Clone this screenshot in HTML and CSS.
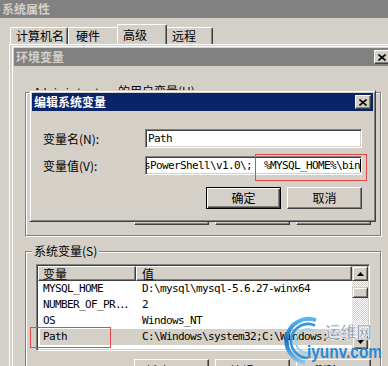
FILE: index.html
```html
<!DOCTYPE html>
<html lang="zh-CN">

<head>
  <meta charset="UTF-8">
  <meta name="viewport" content="width=device-width, initial-scale=1.0">
  <title>系统属性 - 编辑系统变量</title>
  <link rel="stylesheet" href="styles.css">
</head>

<body>
  <div class="screen">
    <!-- 系统属性 -->
    <div class="sys">
      <div class="caption inactive"><span>系统属性</span></div>
      <div class="tabs">
        <div class="tab tab-name">计算机名</div>
        <div class="tab tab-hw">硬件</div>
        <div class="tab tab-adv active">高级</div>
        <div class="tab tab-rm">远程</div>
      </div>
      <div class="panel"></div>
    </div>

    <!-- 环境变量 -->
    <div class="win env">
      <div class="caption inactive">
        <span>环境变量</span>
        <span class="xbtn"><svg width="8" height="7" viewBox="0 0 8 7"><path d="M0.5 0.5L7.5 6.5M7.5 0.5L0.5 6.5" stroke="#000" stroke-width="1.6" /></svg></span>
      </div>
      <div class="env-body">
        <fieldset class="group">
          <legend><span class="mono">Administrator </span>的用户变量(U)</legend>
          <div class="listview user-list"></div>
          <div class="btns">
            <button class="btn">新建(N)...</button>
            <button class="btn">编辑(E)...</button>
            <button class="btn">删除(D)</button>
          </div>
        </fieldset>
        <fieldset class="group">
          <legend>系统变量(S)</legend>
          <div class="listview">
            <div class="lv-main">
              <div class="lv-head">
                <div class="hcell c1">变量</div>
                <div class="hcell c2">值</div>
              </div>
              <div class="row">
                <div class="c1 mono">MYSQL_HOME</div>
                <div class="c2 mono">D:\mysql\mysql-5.6.27-winx64</div>
              </div>
              <div class="row">
                <div class="c1 mono">NUMBER_OF_PR<span class="dots">...</span></div>
                <div class="c2 mono">2</div>
              </div>
              <div class="row">
                <div class="c1 mono">OS</div>
                <div class="c2 mono">Windows_NT</div>
              </div>
              <div class="row sel">
                <div class="c1 mono">Path</div>
                <div class="c2 mono">C:\Windows\system32;C:\Windows;...</div>
              </div>
            </div>
            <div class="vscroll">
              <div class="sb-btn"><svg width="7" height="4" viewBox="0 0 7 4"><path d="M3.5 0L7 4H0Z" fill="#000" /></svg></div>
              <div class="sb-track gap"></div>
              <div class="sb-thumb"></div>
              <div class="sb-track"></div>
              <div class="sb-btn down"><svg width="7" height="4" viewBox="0 0 7 4"><path d="M0 0H7L3.5 4Z" fill="#000" /></svg></div>
            </div>
          </div>
          <div class="btns">
            <button class="btn">新建(W)...</button>
            <button class="btn">编辑(I)...</button>
            <button class="btn">删除(L)</button>
          </div>
        </fieldset>
      </div>
    </div>

    <!-- 编辑系统变量 -->
    <div class="win edit">
      <div class="caption active">
        <span>编辑系统变量</span>
        <span class="xbtn"><svg width="8" height="7" viewBox="0 0 8 7"><path d="M0.5 0.5L7.5 6.5M7.5 0.5L0.5 6.5" stroke="#000" stroke-width="1.6" /></svg></span>
      </div>
      <div class="edit-body">
        <div class="fields">
          <label>变量名(N):</label>
          <div class="field"><span class="mono">Path</span></div>
          <label>变量值(V):</label>
          <div class="field value"><span class="mono">C:\Windows\System32\WindowsPowerShell\v1.0\;  %MYSQL_HOME%\bin</span><span class="caret"></span></div>
        </div>
        <div class="btns dlg-btns">
          <button class="btn default">确定</button>
          <button class="btn">取消</button>
        </div>
      </div>
    </div>

    <div class="mark mark-path"></div>
    <div class="mark mark-value"></div>

    <svg class="watermark" width="108" height="50" viewBox="0 0 108 50">
      <defs>
        <linearGradient id="sw" x1="0" y1="0" x2="0" y2="1">
          <stop offset="0" stop-color="#58b8ec" />
          <stop offset="0.5" stop-color="#1570c8" />
          <stop offset="1" stop-color="#7cc8f0" />
        </linearGradient>
      </defs>
      <path d="M36 4.2A22 22 0 1 0 25 46.6" fill="none" stroke="url(#sw)" stroke-width="4" />
      <path d="M35 9.5A17 17 0 1 0 28 42" fill="none" stroke="#3596de" stroke-width="2.6" />
      <path d="M34 15A12 12 0 1 0 31 37" fill="none" stroke="#8fd2f2" stroke-width="2" />
      <text class="wm-cn" x="45" y="22" textLength="47" lengthAdjust="spacingAndGlyphs">运维网</text>
      <text class="wm-en" x="27" y="42" textLength="75" lengthAdjust="spacingAndGlyphs">iyunv.com</text>
    </svg>
  </div>
</body>

</html>
```

FILE: styles.css
```css
* {
  margin: 0;
  padding: 0;
  box-sizing: border-box;
}

body {
  width: 388px;
  height: 366px;
  overflow: hidden;
  background-color: #d4d0c8;
  color: #000;
  font-family: "Noto Sans CJK SC", sans-serif;
  font-size: 12px;
  line-height: 14px;
}

.screen {
  position: relative;
  width: 388px;
  height: 366px;
  overflow: hidden;
}

.mono {
  font-family: "DejaVu Sans Mono", monospace;
  font-size: 11px;
  letter-spacing: -0.62px;
  white-space: pre;
}

/* title bars */
.caption {
  display: flex;
  justify-content: space-between;
  align-items: center;
  height: 18px;
  padding: 0 2px;
  font-weight: bold;
}

.caption.inactive {
  background-color: #828182;
  color: #d4d0c8;
}

.caption.active {
  background-color: #0a246a;
  color: #fff;
}

.xbtn {
  display: flex;
  justify-content: center;
  align-items: center;
  width: 16px;
  height: 14px;
  background-color: #d4d0c8;
  border: 1px solid;
  border-color: #fff #404040 #404040 #fff;
  box-shadow: inset -1px -1px #808080;
}

/* system properties */
.tabs {
  display: flex;
  align-items: flex-end;
  height: 26px;
  padding-left: 10px;
}

.tab {
  height: 17px;
  line-height: 16px;
  border-top: 1px solid #fff;
  border-left: 1px solid #fff;
  border-right: 1px solid #404040;
  border-radius: 2px 2px 0 0;
  box-shadow: inset -1px 0 #808080;
  background-color: #d4d0c8;
}

.tab-name {
  width: 58px;
  padding-left: 5px;
}

.tab-hw {
  width: 51px;
  padding-left: 7px;
}

.tab-adv {
  width: 46px;
}

.tab-rm {
  width: 48px;
  padding-left: 6px;
}

.tab.active {
  position: relative;
  z-index: 1;
  width: 50px;
  height: 20px;
  margin: 0 -2px;
  padding: 2px 0 0 5px;
}

.panel {
  height: 322px;
  margin-left: 9px;
  border-top: 1px solid #fff;
  border-left: 1px solid #fff;
}

/* windows */
.win {
  position: absolute;
  padding: 2px;
  background-color: #d4d0c8;
  border: 1px solid;
  border-color: #d4d0c8 #404040 #404040 #d4d0c8;
  box-shadow: inset 1px 1px #fff, inset -1px -1px #808080;
}

.env {
  left: 11px;
  top: 45px;
  width: 384px;
  height: 340px;
}

.env-body {
  display: flex;
  flex-direction: column;
  gap: 8px;
  padding: 18px 11px 0;
}

.group {
  display: flex;
  flex-direction: column;
  gap: 8px;
  padding: 6px 10px 10px;
  border: 1px solid #808080;
  box-shadow: inset 1px 1px #fff, 1px 1px #fff;
}

.group legend {
  margin-left: -4px;
  padding: 0 2px;
  line-height: 14px;
  background-color: #d4d0c8;
}

.listview {
  display: flex;
  height: 87px;
  padding: 1px;
  background-color: #fff;
  border: 1px solid;
  border-color: #808080 #fff #fff #808080;
  box-shadow: inset 1px 1px #404040, inset -1px -1px #d4d0c8;
}

.user-list {
  height: 88px;
}

.lv-main {
  flex: 1;
  overflow: hidden;
}

.lv-head {
  display: flex;
  height: 15px;
}

.hcell {
  line-height: 13px;
  background-color: #d4d0c8;
  border: 1px solid;
  border-color: #fff #404040 #404040 #fff;
  box-shadow: inset -1px -1px #808080;
}

.c1 {
  flex: none;
  width: 98px;
  padding-left: 4px;
}

.c2 {
  flex: 1;
  padding-left: 5px;
}

.row {
  display: flex;
  height: 16px;
  line-height: 16px;
}

.row .c1 {
  padding-left: 5px;
}

.row .c2 {
  padding-left: 6px;
}

.row.sel {
  background: linear-gradient(to right, #fff 2px, #d4d0c8 2px);
}

.dots {
  letter-spacing: -2.6px;
}

.vscroll {
  display: flex;
  flex-direction: column;
  width: 16px;
}

.sb-btn,
.sb-thumb {
  display: flex;
  justify-content: center;
  align-items: center;
  height: 15px;
  background-color: #d4d0c8;
  border: 1px solid;
  border-color: #d4d0c8 #404040 #404040 #d4d0c8;
  box-shadow: inset 1px 1px #fff, inset -1px -1px #808080;
}

.sb-btn.down {
  height: 14px;
}

.sb-thumb {
  height: 11px;
}

.sb-track {
  flex: 1;
  background: repeating-conic-gradient(#d4d0c8 0 25%, #fff 0 50%) 0 0 / 2px 2px;
}

.sb-track.gap {
  flex: none;
  height: 6px;
}

/* buttons */
.btns {
  display: flex;
  justify-content: flex-end;
  gap: 6px;
  margin-right: -1px;
}

.btn {
  width: 75px;
  height: 23px;
  font: inherit;
  color: #000;
  background-color: #d4d0c8;
  border: 1px solid;
  border-color: #fff #404040 #404040 #fff;
  box-shadow: inset -1px -1px #808080;
}

.btn.default {
  border-color: #000;
  box-shadow: inset 1px 1px #fff, inset -1px -1px #404040, inset -2px -2px #808080;
}

/* edit dialog */
.edit {
  left: 29px;
  top: 90px;
  width: 347px;
  height: 132px;
}

.edit-body {
  padding: 18px 11px 0;
}

.fields {
  display: grid;
  grid-template-columns: 102px 1fr;
  row-gap: 8px;
  align-items: center;
}

.field {
  display: flex;
  align-items: center;
  height: 19px;
  padding: 0 2px;
  overflow: hidden;
  background-color: #fff;
  border: 1px solid;
  border-color: #808080 #fff #fff #808080;
  box-shadow: inset 1px 1px #404040, inset -1px -1px #d4d0c8;
}

.field.value {
  justify-content: flex-end;
  padding-right: 0;
}

.caret {
  flex: none;
  width: 1px;
  height: 13px;
  background-color: #000;
}

.dlg-btns {
  margin: 12px 0 0;
}

.dlg-btns .btn {
  height: 22px;
}

/* red marks */
.mark {
  position: absolute;
  border: 1px solid #e8474a;
}

.mark-path {
  left: 30px;
  top: 327px;
  width: 81px;
  height: 21px;
}

.mark-value {
  left: 255px;
  top: 154px;
  width: 112px;
  height: 27px;
}

/* watermark */
.watermark {
  position: absolute;
  left: 280px;
  top: 316px;
}

.wm-cn {
  font-family: "Noto Sans CJK SC", sans-serif;
  font-size: 16px;
  font-weight: bold;
  fill: #8a9bb0;
  stroke: #fff;
  stroke-width: 0.5px;
}

.wm-en {
  font-family: "Liberation Sans", Arial, sans-serif;
  font-size: 19px;
  font-weight: bold;
  fill: #2a88d6;
}
```
